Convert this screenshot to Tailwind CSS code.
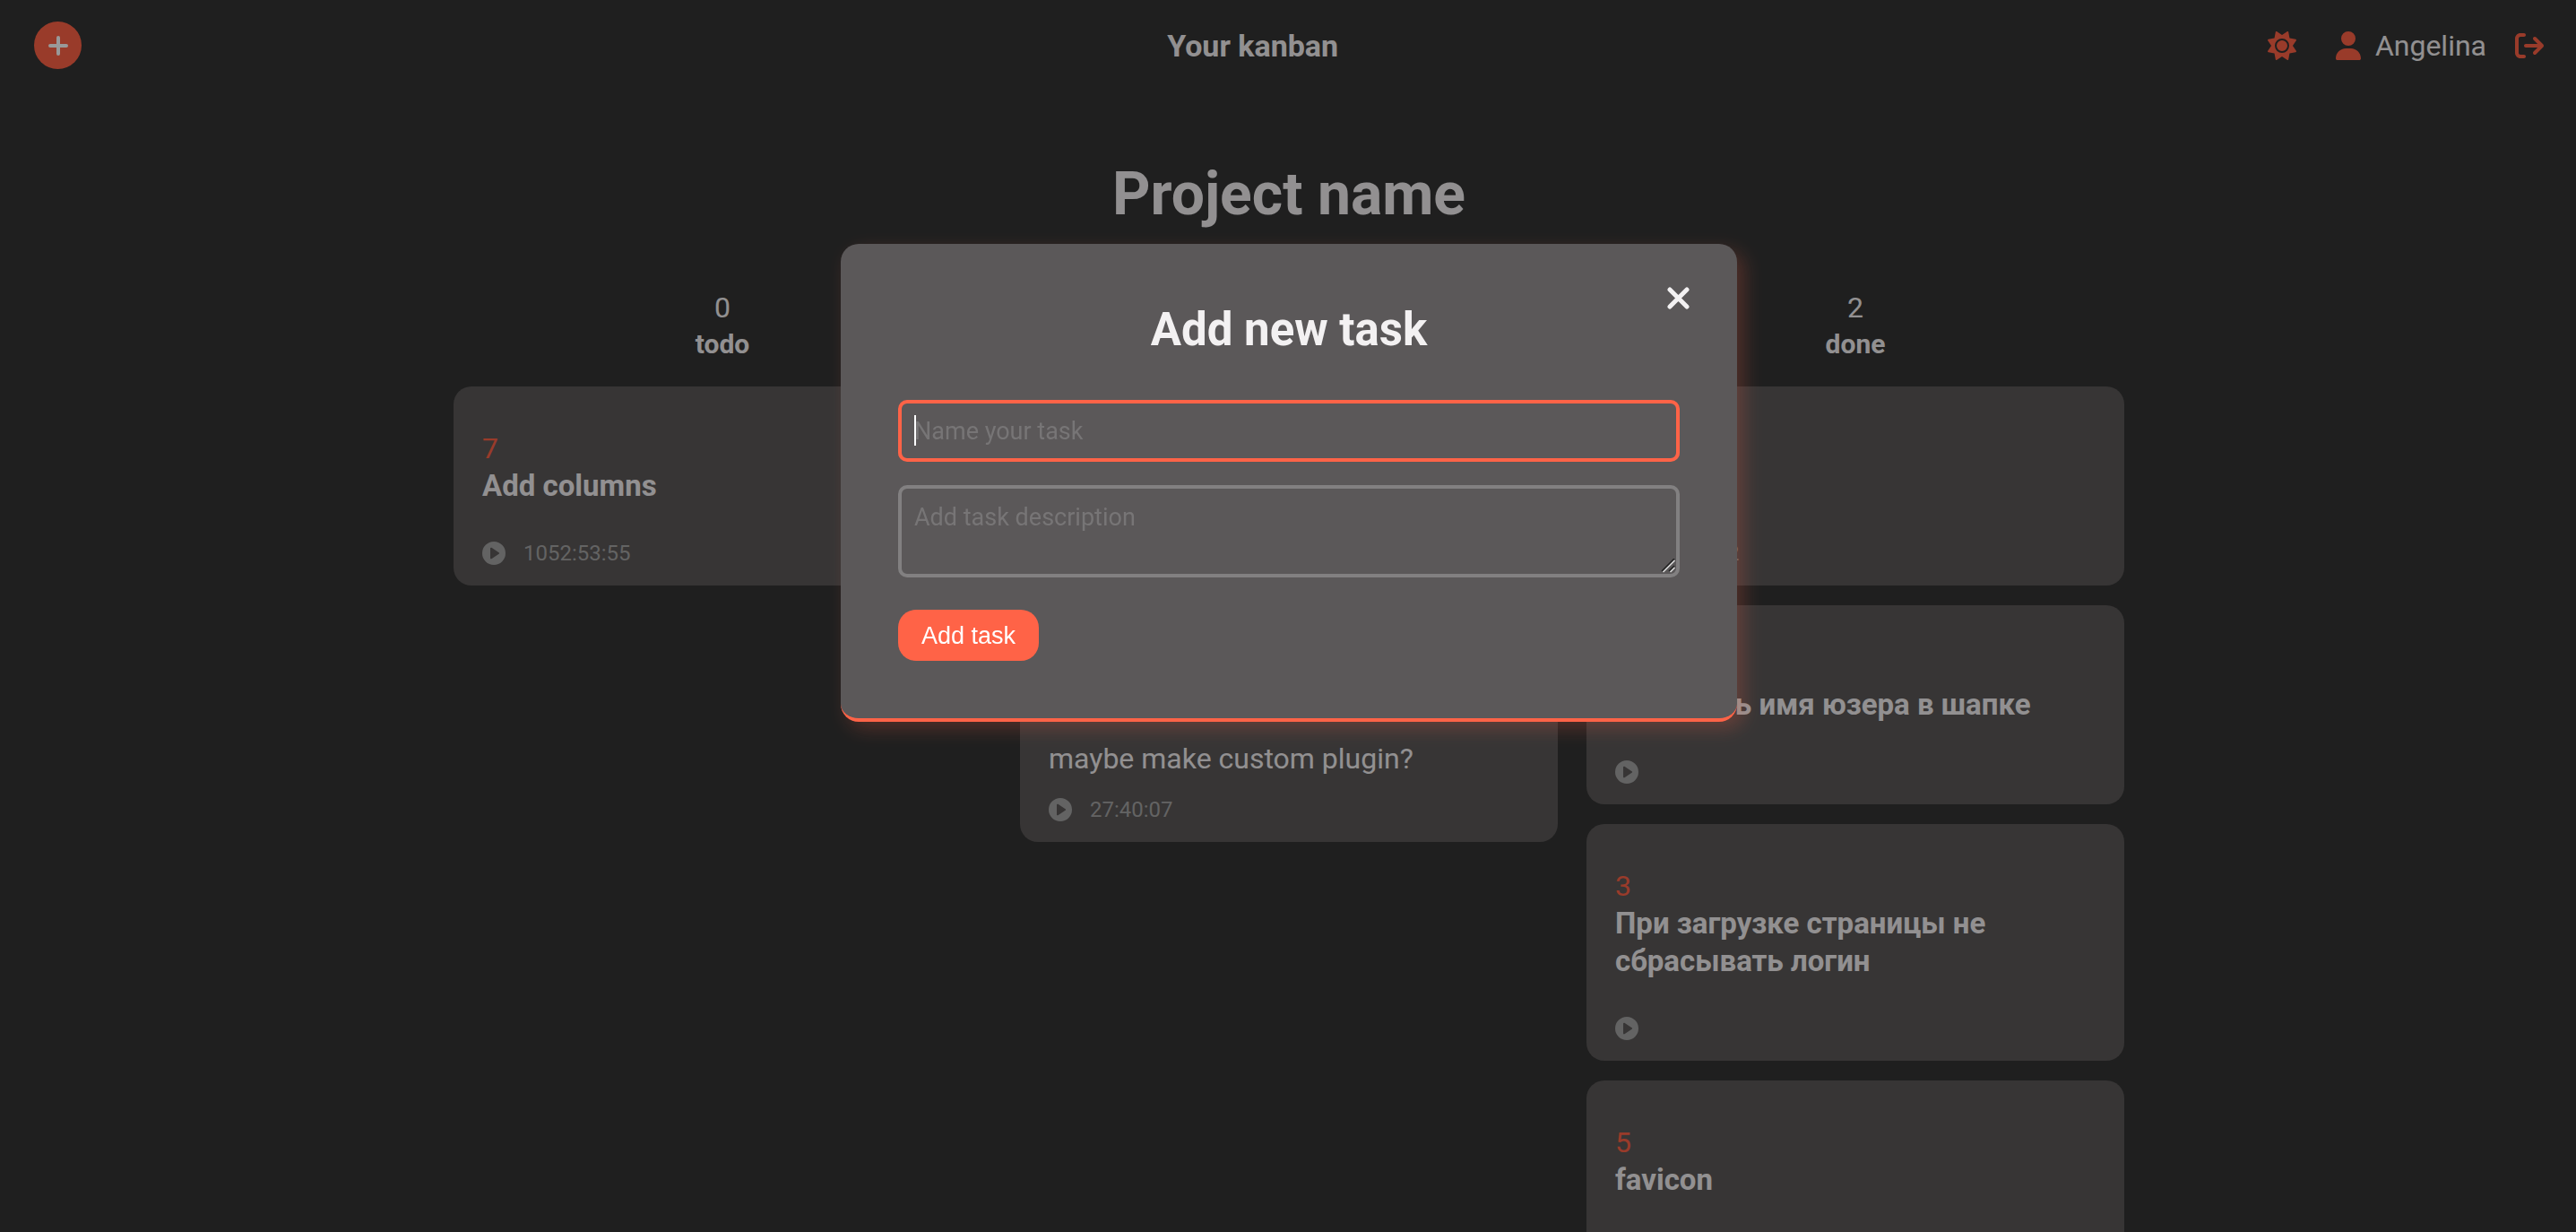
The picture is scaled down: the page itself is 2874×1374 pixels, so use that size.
<!DOCTYPE html>
<html lang="en">
<head>
<meta charset="utf-8">
<meta name="viewport" content="width=device-width, initial-scale=1">
<title>Your kanban</title>
<script src="https://cdn.jsdelivr.net/npm/@tailwindcss/browser@4"></script>
</head>
<body class="h-screen overflow-hidden bg-[#353535] font-['Roboto','Noto_Sans',sans-serif] text-[32px] leading-[42px] text-[#f3f1f2]">
<svg class="hidden" aria-hidden="true">
  <symbol id="play" viewBox="0 0 26 26"><path fill="currentColor" fill-rule="evenodd" d="M13 0a13 13 0 1 0 0 26a13 13 0 1 0 0-26zM9 7.6c0-.8.8-1.2 1.4-.8l8.2 5.4c.6.4.6 1.2 0 1.6l-8.2 5.4c-.6.4-1.4 0-1.4-.8z"/></symbol>
</svg>

<header class="grid grid-cols-[47fr_auto_50fr] items-center pt-6 pb-6 pl-[38px] pr-9">
  <button type="button" aria-label="Add task" class="flex size-[53px] items-center justify-center rounded-full bg-[#ff6347] text-white">
    <svg class="size-[22px]" viewBox="0 0 22 22" fill="none" stroke="currentColor" stroke-width="4" stroke-linecap="round"><path d="M11 2v18M2 11h18"/></svg>
  </button>
  <p class="text-[34px] font-bold">Your kanban</p>
  <div class="flex items-center justify-end">
    <button type="button" aria-label="Toggle theme" class="mr-11 text-[#ff6347]">
      <svg class="size-8" viewBox="0 0 512 512" fill="currentColor"><path d="M361.5 1.2c5 2.1 8.600 6.600 9.600 11.900L391 121l107.900 19.800c5.300 1 9.800 4.600 11.900 9.600s1.500 10.700-1.600 15.200L446.900 256l62.300 90.300c3.100 4.500 3.700 10.200 1.600 15.200s-6.600 8.600-11.900 9.600L391 391 371.100 498.900c-1 5.300-4.600 9.800-9.600 11.900s-10.700 1.500-15.200-1.600L256 446.900l-90.300 62.300c-4.500 3.100-10.200 3.700-15.200 1.600s-8.600-6.600-9.600-11.900L121 391 13.100 371.100c-5.300-1-9.800-4.600-11.900-9.600s-1.500-10.700 1.600-15.200L65.100 256 2.800 165.700c-3.100-4.500-3.700-10.200-1.600-15.200s6.600-8.600 11.900-9.600L121 121 140.900 13.100c1-5.300 4.600-9.800 9.600-11.900s10.700-1.500 15.200 1.600L256 65.100 346.300 2.800c4.500-3.100 10.200-3.700 15.200-1.600zM160 256a96 96 0 1 1 192 0 96 96 0 1 1 -192 0zm224 0a128 128 0 1 0 -256 0 128 128 0 1 0 256 0z"/></svg>
    </button>
    <a href="#" class="mr-8 flex items-center gap-4">
      <svg class="h-8 w-7 text-[#ff6347]" viewBox="0 0 448 512" fill="currentColor"><path d="M224 256A128 128 0 1 0 224 0a128 128 0 1 0 0 256zm-45.700 48C79.800 304 0 383.800 0 482.300C0 498.700 13.300 512 29.700 512H418.300c16.400 0 29.700-13.300 29.700-29.700C448 383.800 368.200 304 269.700 304H178.300z"/></svg>
      <span>Angelina</span>
    </a>
    <button type="button" aria-label="Log out" class="text-[#ff6347]">
      <svg class="size-8" viewBox="0 0 512 512" fill="currentColor"><path d="M502.600 278.600c12.500-12.500 12.500-32.800 0-45.300l-128-128c-12.500-12.500-32.800-12.500-45.300 0s-12.500 32.800 0 45.300L402.700 224 192 224c-17.700 0-32 14.300-32 32s14.300 32 32 32l210.700 0-73.400 73.400c-12.500 12.500-12.500 32.800 0 45.300s32.800 12.500 45.300 0l128-128zM160 96c17.700 0 32-14.300 32-32s-14.300-32-32-32L96 32C43 32 0 75 0 128L0 384c0 53 43 96 96 96l64 0c17.700 0 32-14.300 32-32s-14.300-32-32-32l-64 0c-17.700 0-32-14.300-32-32l0-256c0-17.700 14.300-32 32-32l64 0z"/></svg>
    </button>
  </div>
</header>

<main class="pt-[74px] pl-0.5">
  <h1 class="text-center text-[66px] leading-[84px] font-bold">Project name</h1>
  <div class="mx-auto mt-[63px] grid max-w-[1864px] grid-cols-3 items-start gap-8">

    <section>
      <p class="text-center">0</p>
      <h2 class="text-center text-[30px] leading-[39px] font-bold">todo</h2>
      <div class="mt-7 flex flex-col gap-[22px]">
        <article class="rounded-[20px] bg-[#5c5959] px-8 pt-12 pb-5">
          <p class="text-[#ff6347]">7</p>
          <h3 class="text-[33px] font-bold">Add columns</h3>
          <div class="mt-[38px] flex h-8 items-center gap-5 text-2xl leading-8 text-[#a5a5a5]">
            <button type="button" aria-label="Start timer"><svg class="size-[26px]"><use href="#play"/></svg></button>
            <span>1052:53:55</span>
          </div>
        </article>
      </div>
    </section>

    <section>
      <div class="h-[81px]"></div>
      <div class="mt-7 flex flex-col gap-[22px]">
        <article class="h-[222px] rounded-[20px] bg-[#5c5959]"></article>
        <article class="rounded-[20px] bg-[#5c5959] px-8 pt-[150px] pb-5">
          <p>maybe make custom plugin?</p>
          <div class="mt-5 flex h-8 items-center gap-5 text-2xl leading-8 text-[#a5a5a5]">
            <button type="button" aria-label="Start timer"><svg class="size-[26px]"><use href="#play"/></svg></button>
            <span>27:40:07</span>
          </div>
        </article>
      </div>
    </section>

    <section>
      <p class="text-center">2</p>
      <h2 class="text-center text-[30px] leading-[39px] font-bold">done</h2>
      <div class="mt-7 flex flex-col gap-[22px]">
        <article class="rounded-[20px] bg-[#5c5959] px-8 pt-[170px] pb-5">
          <div class="flex h-8 items-center gap-5 text-2xl leading-8 text-[#a5a5a5]">
            <button type="button" aria-label="Start timer"><svg class="size-[26px]"><use href="#play"/></svg></button>
            <span>12:04:32</span>
          </div>
        </article>
        <article class="rounded-[20px] bg-[#5c5959] px-8 pt-[90px] pb-5">
          <h3 lang="ru" class="text-[33px] font-bold">Добавить имя юзера в шапке</h3>
          <div class="mt-[38px] flex h-8 items-center text-[#a5a5a5]">
            <button type="button" aria-label="Start timer"><svg class="size-[26px]"><use href="#play"/></svg></button>
          </div>
        </article>
        <article class="rounded-[20px] bg-[#5c5959] px-8 pt-12 pb-5">
          <p class="text-[#ff6347]">3</p>
          <h3 lang="ru" class="text-[33px] font-bold">При загрузке страницы не<br>сбрасывать логин</h3>
          <div class="mt-[38px] flex h-8 items-center text-[#a5a5a5]">
            <button type="button" aria-label="Start timer"><svg class="size-[26px]"><use href="#play"/></svg></button>
          </div>
        </article>
        <article class="rounded-[20px] bg-[#5c5959] px-8 pt-12 pb-5">
          <p class="text-[#ff6347]">5</p>
          <h3 class="text-[33px] font-bold">favicon</h3>
          <div class="mt-[38px] flex h-8 items-center text-[#a5a5a5]">
            <button type="button" aria-label="Start timer"><svg class="size-[26px]"><use href="#play"/></svg></button>
          </div>
        </article>
      </div>
    </section>
  </div>
</main>

<!-- Add-task dialog -->
<div class="fixed inset-0 flex items-start justify-center bg-black/40 pt-[272px] pl-0.5">
  <div role="dialog" aria-modal="true" aria-labelledby="dialog-title" class="relative w-full max-w-[1000px] rounded-[20px] border-b-4 border-[#ff6347] bg-[#5b5859] p-16 shadow-[8px_8px_20px_rgba(255,99,71,0.22)]">
    <button type="button" aria-label="Close" class="absolute top-12 right-[52px]">
      <svg class="size-[26px]" viewBox="0 0 26 26" fill="none" stroke="currentColor" stroke-width="5" stroke-linecap="round"><path d="M3 3l19 19M22 3L3 22"/></svg>
    </button>
    <h2 id="dialog-title" class="text-center text-[51px] leading-[64px] font-bold">Add new task</h2>
    <form class="mt-[46px] flex flex-col items-start">
      <div class="relative w-full">
        <input type="text" aria-label="Task name" placeholder="Name your task" class="block h-[69px] w-full rounded-[10px] border-4 border-[#ff6347] bg-transparent px-3.5 text-[27px] leading-9 placeholder-[#777576] outline-none">
        <span class="absolute top-[17px] left-[18px] h-[34px] w-0.5 bg-white"></span>
      </div>
      <div class="relative mt-[26px] w-full">
        <textarea aria-label="Task description" placeholder="Add task description" class="block h-[103px] w-full resize-none rounded-[10px] border-4 border-[#828081] bg-transparent px-3.5 pt-3.5 text-[27px] leading-9 placeholder-[#777576] outline-none"></textarea>
        <!-- Resize grip -->
        <svg class="absolute right-[5px] bottom-[5px] size-4" viewBox="0 0 16 16" fill="none"><path d="M1 14L15 0M9 14l6-6" stroke="#222" stroke-width="1.500"/><path d="M2.500 15L15.500 2M10.500 15l5-5" stroke="#ddd" stroke-width="1.500"/></svg>
      </div>
      <button type="submit" class="mt-9 h-[57px] rounded-[20px] bg-[#ff6347] px-[26px] font-['Liberation_Sans',sans-serif] text-[27px] leading-8 text-white">Add task</button>
    </form>
  </div>
</div>
</body>
</html>
